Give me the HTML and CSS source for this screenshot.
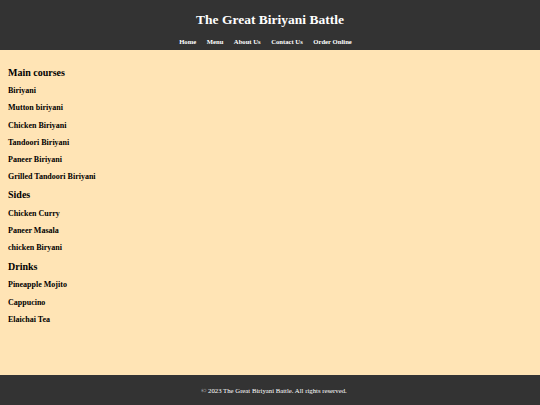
FILE: index.html
```html
<!DOCTYPE html>
<html>
<head>
<meta charset="utf-8">
<title>The Great Biriyani Battle</title>
<link rel="stylesheet" href="styles.css">
</head>
<body>
<header class="site-header">
  <h1 class="site-title">The Great Biriyani Battle</h1>
  <nav class="site-nav">
    <a href="#">Home</a>
    <a href="#">Menu</a>
    <a href="#">About Us</a>
    <a href="#">Contact Us</a>
    <a href="#">Order Online</a>
  </nav>
</header>
<main class="menu">
  <h2 class="menu-heading">Main courses</h2>
  <h3 class="menu-item">Biriyani</h3>
  <h3 class="menu-item">Mutton biriyani</h3>
  <h3 class="menu-item">Chicken Biriyani</h3>
  <h3 class="menu-item">Tandoori Biriyani</h3>
  <h3 class="menu-item">Paneer Biriyani</h3>
  <h3 class="menu-item">Grilled Tandoori Biriyani</h3>
  <h2 class="menu-heading">Sides</h2>
  <h3 class="menu-item">Chicken Curry</h3>
  <h3 class="menu-item">Paneer Masala</h3>
  <h3 class="menu-item">chicken Biryani</h3>
  <h2 class="menu-heading">Drinks</h2>
  <h3 class="menu-item">Pineapple Mojito</h3>
  <h3 class="menu-item">Cappucino</h3>
  <h3 class="menu-item">Elaichai Tea</h3>
</main>
<footer class="site-footer">
  <p>&copy; 2023 The Great Biriyani Battle. All rights reserved.</p>
</footer>
</body>
</html>
```
FILE: styles.css
```css
html, body {
  margin: 0;
  padding: 0;
}
body {
  font-family: "Liberation Serif", "Times New Roman", serif;
  background: #ffe4b5;
  color: #000;
  min-height: 100vh;
  display: flex;
  flex-direction: column;
}
.site-header {
  background: #333;
  color: #fff;
  text-align: center;
  padding: 12px 0 3.75px;
}
.site-title {
  margin: 0;
  font-size: 13.5px;
  line-height: 16px;
}
.site-nav {
  margin-top: 9.25px;
  display: flex;
  justify-content: center;
  gap: 10.5px;
  padding-right: 9px;
  line-height: 9px;
}
.site-nav a {
  color: #fff;
  text-decoration: none;
  font-weight: bold;
  font-size: 6.67px;
}
.menu {
  flex: 1;
  padding: 9.4px 8px 20px;
}
.menu-heading {
  font-size: 10px;
  line-height: 12px;
  margin: 7.2px 0 7.7px;
}
.menu-item {
  font-size: 8px;
  line-height: 10px;
  margin: 7.2px 0;
}
.site-footer {
  background: #333;
  color: #fff;
  height: 30px;
  display: flex;
  align-items: center;
  justify-content: center;
  padding-left: 8px;
}
.site-footer p {
  margin: 0;
  font-size: 6.75px;
}
```
